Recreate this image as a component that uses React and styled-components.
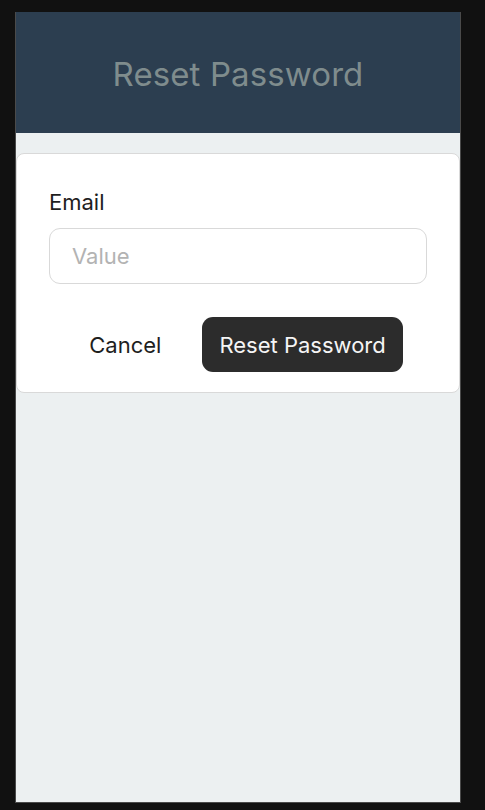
import React from 'react';
import styled, { createGlobalStyle } from 'styled-components';

const GlobalStyle = createGlobalStyle`
  html, body {
    margin: 0;
    padding: 0;
    background: #111111;
    font-family: Inter, "Noto Sans", "Liberation Sans", sans-serif;
  }
`;

const Page = styled.div`
  padding: 12px 0 0 15px;
  height: 810px;
  box-sizing: border-box;
`;

const Frame = styled.div`
  width: 446px;
  height: 791px;
  box-sizing: border-box;
  border: 1px solid #4a4a4a;
  border-top: none;
  background: #ecf0f1;
  display: flex;
  flex-direction: column;
`;

const Header = styled.header`
  height: 121px;
  background: #2c3e50;
  display: flex;
  align-items: center;
  justify-content: center;
  flex-shrink: 0;

  h1 {
    margin: 0;
    font-size: 33px;
    font-weight: 400;
    color: #7f8c8d;
    letter-spacing: 0.1px;
    transform: translateY(1px);
  }
`;

const Content = styled.main`
  padding-top: 20px;
`;

const Card = styled.form`
  background: #ffffff;
  border: 1px solid #d9d9d9;
  border-radius: 8px;
  padding: 33px 32px 20px;
  display: flex;
  flex-direction: column;
`;

const Field = styled.label`
  display: flex;
  flex-direction: column;
  gap: 10px;
`;

const LabelText = styled.span`
  font-size: 22px;
  line-height: 31px;
  color: #1e1e1e;
`;

const Input = styled.input`
  height: 56px;
  box-sizing: border-box;
  border: 1px solid #d9d9d9;
  border-radius: 11px;
  padding: 0 22px;
  font-family: inherit;
  font-size: 22px;
  color: #1e1e1e;
  outline: none;

  &::placeholder {
    color: #b3b3b3;
  }
`;

const Actions = styled.div`
  display: flex;
  justify-content: center;
  gap: 19px;
  margin-top: 33px;
  padding-right: 6px;
`;

const Button = styled.button`
  height: 55px;
  padding: 0 ${p => (p.$primary ? '17px' : '22px')};
  border-radius: 11px;
  border: none;
  background: ${p => (p.$primary ? '#2c2c2c' : 'transparent')};
  color: ${p => (p.$primary ? '#f5f5f5' : '#1e1e1e')};
  font-family: inherit;
  font-size: 22px;
  cursor: pointer;
`;

export default function App() {
  return (
    <>
      <GlobalStyle />
      <Page>
        <Frame>
          <Header>
            <h1>Reset Password</h1>
          </Header>
          <Content>
            <Card onSubmit={e => e.preventDefault()}>
              <Field>
                <LabelText>Email</LabelText>
                <Input type="email" placeholder="Value" />
              </Field>
              <Actions>
                <Button type="button">Cancel</Button>
                <Button type="submit" $primary>Reset Password</Button>
              </Actions>
            </Card>
          </Content>
        </Frame>
      </Page>
    </>
  );
}
